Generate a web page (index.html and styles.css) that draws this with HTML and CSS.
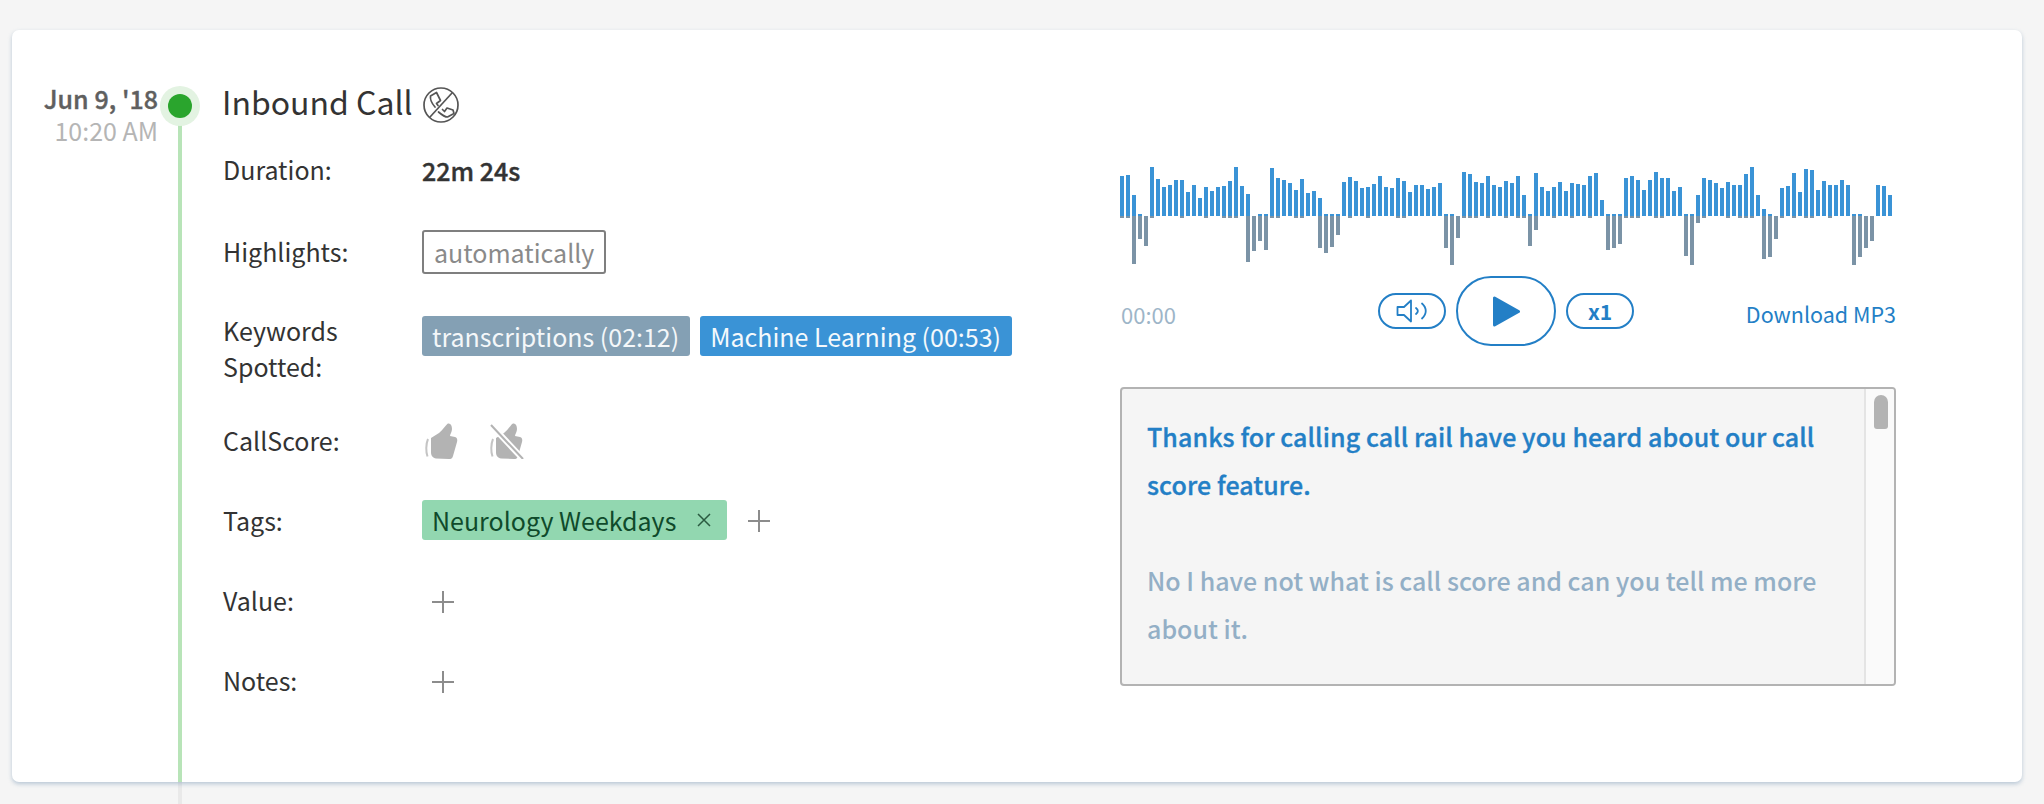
FILE: index.html
```html
<!DOCTYPE html>
<html lang="en">
<head>
<meta charset="utf-8">
<title>Inbound Call</title>
<link rel="stylesheet" href="styles.css">
</head>
<body>
<div class="rail-out"></div>
<main class="card">
  <div class="rail"></div>
  <div class="halo"><div class="dot"></div></div>
  <div class="when">
    <div class="date">Jun 9, '18</div>
    <div class="time">10:20 AM</div>
  </div>
  <section class="details">
    <h1 class="title"><span class="title-text">Inbound Call</span>
      <svg class="phone" viewBox="0 0 36 36" width="36" height="36" fill="none" stroke="#555" stroke-width="1.7" stroke-linejoin="round" stroke-linecap="round">
        <circle cx="18" cy="18" r="17"/>
        <path d="M29 6 7 30"/>
        <path d="M12 20C8.500 16 7 12 7.500 9L13.500 5.500 17.500 13.500 13.500 16.500 15 18.500"/>
        <path d="M15.500 25C19 28 22 30 24.500 30L31 26.500 30 23 24 21 21.500 24.500 19.500 22.500"/>
      </svg>
    </h1>
    <div class="row r-duration"><div class="label">Duration:</div><div class="value strong">22m 24s</div></div>
    <div class="row r-high"><div class="label">Highlights:</div><div class="value"><span class="outline">automatically</span></div></div>
    <div class="row r-key"><div class="label">Keywords<br>Spotted:</div><div class="value tags"><span class="tag slate">transcriptions (02:12)</span><span class="tag blue">Machine Learning (00:53)</span></div></div>
    <div class="row r-score"><div class="label">CallScore:</div>
      <div class="value thumbs">
        <svg viewBox="0 0 34 36" width="34" height="36"><path class="thumb" d="M6 15 14 10C18 7 20 3 22.500.8 25-.5 27 2 27 6 27 9 25 11 25 13L30 14C32.500 15 32.500 17 32 19L28 33C27.500 35.500 26 36 24 36L11 35.500C8 35 6 33 6 29Z"/><path class="bar" d="M3 16C.8 21 .8 29 2.500 33.500"/></svg>
        <svg viewBox="0 0 34 36" width="34" height="36"><path class="thumb" d="M6 15 14 10C18 7 20 3 22.500.8 25-.5 27 2 27 6 27 9 25 11 25 13L30 14C32.500 15 32.500 17 32 19L28 33C27.500 35.500 26 36 24 36L11 35.500C8 35 6 33 6 29Z"/><path class="bar" d="M3 16C.8 21 .8 29 2.500 33.500"/><path class="gap" d="M0 1 33 36"/><path class="slash" d="M1 2 33 36"/></svg>
      </div>
    </div>
    <div class="row r-tags"><div class="label">Tags:</div><div class="value tags"><span class="tag green">Neurology Weekdays<svg class="close" viewBox="0 0 14 14" width="14" height="14"><path d="M1 1 13 13M13 1 1 13"/></svg></span><svg class="plus tag-plus" viewBox="0 0 22 22" width="22" height="22"><path d="M11 0V22M0 11H22"/></svg></div></div>
    <div class="row r-value"><div class="label">Value:</div><div class="value"><svg class="plus" viewBox="0 0 22 22" width="22" height="22"><path d="M11 0V22M0 11H22"/></svg></div></div>
    <div class="row r-notes"><div class="label">Notes:</div><div class="value"><svg class="plus" viewBox="0 0 22 22" width="22" height="22"><path d="M11 0V22M0 11H22"/></svg></div></div>
  </section>
  <section class="player">
    <svg class="wave" viewBox="0 0 772 110" width="772" height="110" fill="none" stroke-width="4">
      <path stroke="#7b93a6" d="M2 56V58M8 56V58M14 56V104M20 56V79M26 56V86M32 56V58M62 56V58M86 56V58M104 56V58M110 56V58M116 56V58M128 56V102M134 56V91M140 56V81M146 56V90M152 56V58M158 56V58M176 56V58M182 56V58M200 56V88M206 56V93M212 56V87M218 56V75M230 56V58M248 56V58M278 56V58M284 56V58M326 56V88M332 56V105M338 56V78M344 56V58M350 56V58M356 56V58M368 56V58M386 56V58M398 56V58M404 56V58M410 56V86M416 56V70M434 56V58M452 56V58M470 56V58M488 56V90M494 56V88M500 56V84M506 56V58M512 56V58M518 56V58M536 56V58M542 56V58M566 56V96M572 56V105M578 56V63M584 56V58M608 56V58M620 56V58M626 56V58M632 56V58M644 56V99M650 56V97M656 56V79M662 56V58M674 56V58M686 56V58M692 56V58M710 56V58M734 56V105M740 56V97M746 56V88M752 56V81"/>
      <path stroke="#3a93d6" d="M2 16V56M8 15V56M14 35V56M20 54V56M32 7V56M38 19V56M44 27V56M50 25V56M56 20V56M62 20V56M68 32V56M74 25V56M80 38V56M86 27V56M92 31V56M98 27V56M104 26V56M110 21V56M116 7V56M122 26V56M128 34V56M140 54V56M146 54V56M152 8V56M158 18V56M164 20V56M170 23V56M176 30V56M182 19V56M188 33V56M194 31V56M200 38V56M206 54V56M212 54V56M218 54V56M224 22V56M230 17V56M236 21V56M242 28V56M248 27V56M254 24V56M260 16V56M266 27V56M272 28V56M278 18V56M284 21V56M290 32V56M296 25V56M302 25V56M308 29V56M314 27V56M320 23V56M326 54V56M332 54V56M344 12V56M350 14V56M356 22V56M362 23V56M368 16V56M374 25V56M380 27V56M386 21V56M392 23V56M398 16V56M404 35V56M410 54V56M416 13V56M422 27V56M428 31V56M434 27V56M440 22V56M446 31V56M452 23V56M458 24V56M464 25V56M470 16V56M476 13V56M482 40V56M488 54V56M494 54V56M500 54V56M506 18V56M512 16V56M518 20V56M524 30V56M530 20V56M536 12V56M542 18V56M548 18V56M554 31V56M560 27V56M566 54V56M572 54V56M578 35V56M584 18V56M590 20V56M596 23V56M602 28V56M608 22V56M614 25V56M620 25V56M626 14V56M632 7V56M638 35V56M644 49V56M650 54V56M662 28V56M668 26V56M674 13V56M680 32V56M686 9V56M692 10V56M698 30V56M704 21V56M710 25V56M716 25V56M722 20V56M728 25V56M734 54V56M740 54V56M758 25V56M764 26V56M770 35V56"/>
    </svg>
    <div class="controls">
      <span class="clock">00:00</span>
      <div class="buttons">
        <button class="pill small" aria-label="Volume">
          <svg viewBox="0 0 32 24" width="32" height="24" fill="none" stroke="#237fc6" stroke-width="1.800" stroke-linejoin="round" stroke-linecap="round"><path d="M1.500 8V16H8L15 22.500V1.500L8 8Z"/><path d="M20 9C22.500 11 22.500 13 20 15"/><path d="M26 4.500C31 9 31 15 26 19.500"/></svg>
        </button>
        <button class="pill big" aria-label="Play">
          <svg viewBox="0 0 27 31" width="27" height="31"><path fill="#237fc6" stroke="#237fc6" stroke-width="3" stroke-linejoin="round" d="M1.500 2V29L25.500 15.500Z"/></svg>
        </button>
        <button class="pill small speed">x1</button>
      </div>
      <a class="download">Download MP3</a>
    </div>
    <div class="transcript">
      <div class="lines">
        <p class="agent">Thanks for calling call rail have you heard about our call score feature.</p>
        <p class="caller">No I have not what is call score and can you tell me more about it.</p>
      </div>
      <div class="track"><div class="thumb-bar"></div></div>
    </div>
  </section>
</main>
</body>
</html>
```
FILE: styles.css
```css
* { box-sizing: border-box; }
html, body { margin: 0; height: 804px; overflow: hidden; }
body {
  background: #f5f5f5;
  padding: 30px 22px 22px 12px;
  font-family: "Noto Sans CJK SC", "Noto Sans", sans-serif;
  font-size: 25px;
  color: #333;
  position: relative;
}
.rail-out {
  position: absolute; left: 178px; top: 700px; width: 4px; height: 104px;
  background: #e9e9e9;
}
.card {
  position: relative;
  display: flex;
  height: 752px;
  background: #fff;
  border-radius: 7px;
  box-shadow: 0 2px 4px rgba(110, 145, 175, .45);
}
.rail {
  position: absolute; left: 166px; top: 76px; width: 4px; bottom: 0;
  background: #b8e4b8;
}
.halo {
  position: absolute; left: 148px; top: 56px; width: 40px; height: 40px;
  border-radius: 50%; background: #e3f3e2;
  display: flex; align-items: center; justify-content: center;
}
.dot { width: 24px; height: 24px; border-radius: 50%; background: #2aa52d; }
.when { width: 146px; padding-top: 52px; text-align: right; line-height: 32px; flex: none; }
.date { font-weight: 500; color: #5f5f5f; -webkit-text-stroke: .4px #5f5f5f; letter-spacing: .05px; }
.time { color: #b5b5b5; }
.details { margin-left: 65px; width: 898px; flex: none; padding-top: 50px; }
.title {
  margin: 0 0 0 -1px; font-size: 32px; font-weight: 400; line-height: 52px; height: 52px;
  display: flex; align-items: center; gap: 10px; color: #333;
}
.title-text { margin-bottom: 10px; }
.phone { margin-bottom: 2px; }
.row { display: flex; line-height: 36px; }
.label { width: 199px; flex: none; margin: -1px 0 1px; }
.r-duration { margin-top: 20px; }
.r-high { margin-top: 42px; }
.r-high .label { padding-top: 4px; }
.r-key { margin-top: 39px; }
.r-score { margin-top: 38px; }
.r-tags { margin-top: 41px; }
.r-tags .label { padding-top: 3px; }
.r-value { margin-top: 43px; }
.r-notes { margin-top: 44px; }
.strong { font-weight: 500; -webkit-text-stroke: .4px #333; }
.outline {
  display: block; height: 44px; line-height: 40px; padding: 0 10px;
  border: 2px solid #7f7f7f; border-radius: 3px; color: #8a8a8a;
}
.tags { display: flex; align-items: flex-start; gap: 10px; }
.r-key .tags { margin-top: 3px; }
.tag {
  display: flex; align-items: center; height: 40px; padding: 0 11px 0 10px; border-radius: 3px; white-space: nowrap;
}
.slate { background: #84a0b4; color: #f4f7f9; }
.blue { background: #3a93d6; color: #f4f9fc; }
.green { background: #92d7b0; color: #0f4a2b; padding-right: 16px; }
.close { margin-left: 21px; fill: none; stroke: #2a5a40; stroke-width: 1.500; }
.thumbs { display: flex; gap: 31px; padding-left: 3px; }
.thumb { fill: #b3b3b3; }
.bar { fill: none; stroke: #c4c4c4; stroke-width: 2; }
.gap { stroke: #fff; stroke-width: 6; fill: none; }
.slash { stroke: #b3b3b3; stroke-width: 2; fill: none; }
.plus { display: block; margin: 8px 0 0 10px; fill: none; stroke: #8c8c8c; stroke-width: 2; }
.tag-plus { margin: 10px 0 0 11px; }
.player { width: 776px; flex: none; margin-left: -1px; padding-top: 130px; }
.wave { display: block; margin-left: 0; }
.controls {
  position: relative; height: 70px; margin-top: 6px;
  display: flex; align-items: center; justify-content: space-between;
}
.clock { color: #9db5c8; font-size: 22px; margin: 5px 0 0 1px; }
.download { color: #237fc6; font-size: 21.500px; margin: 5px 0 0 0; }
.buttons { display: flex; align-items: center; gap: 10px; position: absolute; left: 258px; top: 0; height: 70px; }
.pill {
  display: flex; align-items: center; justify-content: center; padding: 0;
  background: #fff; border: 2px solid #237fc6; font: inherit; color: #237fc6;
}
.small { width: 68px; height: 36px; border-radius: 18px; }
.big { width: 100px; height: 70px; border-radius: 35px; }
.speed { font-weight: 700; font-size: 21px; }
.transcript {
  display: flex; height: 299px; margin-top: 41px;
  background: #f5f5f5; border: 2px solid #b3b3b3; border-radius: 4px; overflow: hidden;
}
.lines { width: 742px; flex: none; padding: 23px 0 0 25px; line-height: 48px; }
.lines p { margin: 0 0 48px; width: 690px; }
.agent { color: #237fc6; font-weight: 500; -webkit-text-stroke: .35px #237fc6; letter-spacing: .09px; }
.caller { color: #93afc6; font-weight: 500; }
.track { flex: 1; background: #fafafa; border-left: 2px solid #e4e4e4; padding: 6px 6px 0 8px; }
.thumb-bar { height: 34px; background: #b3b3b3; border-radius: 7px 7px 3px 3px; }
```
